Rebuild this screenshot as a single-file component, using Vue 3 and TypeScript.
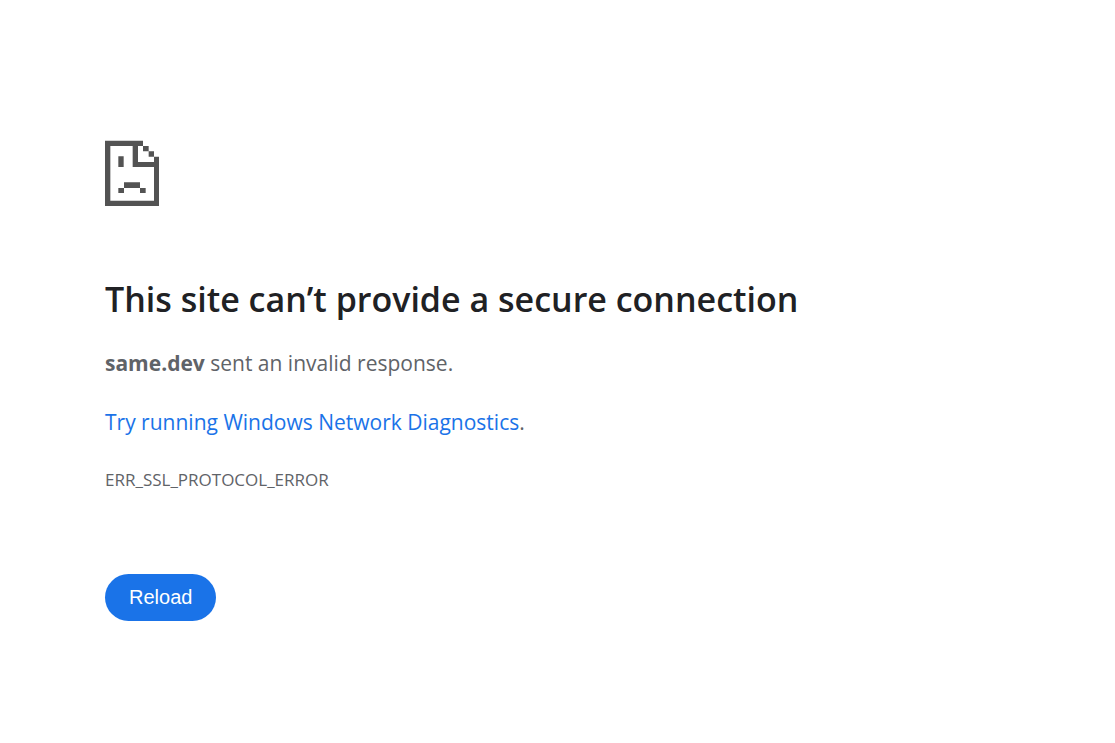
<script setup lang="ts">
const host: string = 'same.dev'
const errorCode: string = 'ERR_SSL_PROTOCOL_ERROR'

function reload(): void {
  window.location.reload()
}
</script>

<template>
  <main class="page">
    <svg class="icon" viewBox="0 0 162 198" aria-hidden="true">
      <path d="M0 2H114V18H99V66H147V50H162V198H0ZM16 18V182H147V81H83V18Z" fill-rule="evenodd" />
      <path d="M114 18H131V34H114ZM131 34H147V50H131ZM40 49H56V81H40ZM57 127H105V144H57ZM40 144H57V159H40ZM105 144H122V159H105Z" />
    </svg>
    <h1 class="title">This site can’t provide a secure connection</h1>
    <p class="text"><strong>{{ host }}</strong> sent an invalid response.</p>
    <p class="text"><a class="link" href="#">Try running Windows Network Diagnostics</a>.</p>
    <p class="code">{{ errorCode }}</p>
    <button class="reload" type="button" @click="reload">Reload</button>
  </main>
</template>

<style>
body {
  margin: 0;
  background: #fff;
}
</style>

<style scoped>
.page {
  box-sizing: border-box;
  max-width: 1010px;
  padding: 140px 105px 0;
  color: #5f6368;
  font-family: "Segoe UI", "Open Sans", "Noto Sans", sans-serif;
}

.icon {
  display: block;
  width: 54px;
  height: 66px;
  fill: #535353;
}

.title {
  margin: 70px 0 24px;
  color: #202124;
  font-size: 34px;
  font-weight: 600;
  line-height: 46px;
}

.text {
  margin: 0 0 25px;
  font-size: 21px;
  line-height: 34px;
}

.link {
  color: #1a73e8;
  text-decoration: none;
}

.code {
  margin: 0;
  font-size: 17px;
  line-height: 32px;
}

.reload {
  display: block;
  height: 47px;
  margin-top: 78px;
  padding: 0 24px;
  border: 0;
  border-radius: 24px;
  background: #1a73e8;
  color: #fff;
  font-family: "Liberation Sans", Arial, sans-serif;
  font-size: 20px;
  cursor: pointer;
}
</style>
